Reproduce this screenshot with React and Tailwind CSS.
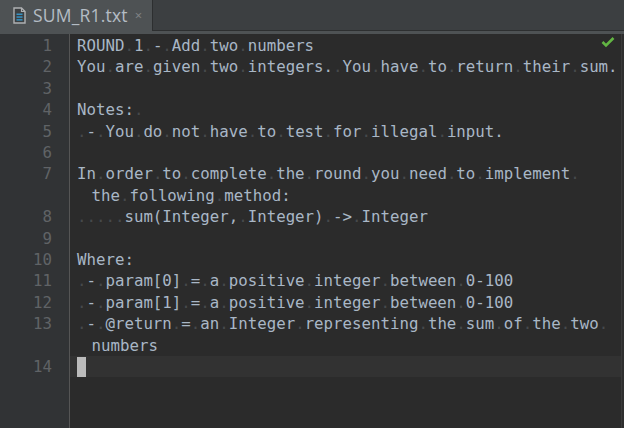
const lines = [
  { n: 1, rows: ["ROUND 1 - Add two numbers"] },
  { n: 2, rows: ["You are given two integers. You have to return their sum."] },
  { n: 3, rows: [""] },
  { n: 4, rows: ["Notes: "] },
  { n: 5, rows: [" - You do not have to test for illegal input."] },
  { n: 6, rows: [""] },
  { n: 7, rows: ["In order to complete the round you need to implement ", "the following method:"] },
  { n: 8, rows: ["     sum(Integer, Integer) -> Integer"] },
  { n: 9, rows: [""] },
  { n: 10, rows: ["Where:"] },
  { n: 11, rows: [" - param[0] = a positive integer between 0-100"] },
  { n: 12, rows: [" - param[1] = a positive integer between 0-100"] },
  { n: 13, rows: [" - @return = an Integer representing the sum of the two ", "numbers"] },
];

function Dotted({ text }) {
  const parts = text.split(" ");
  return (
    <>
      {parts.map((p, i) => (
        <span key={i}>
          {i > 0 && <span className="text-[#46494b]">.</span>}
          {p}
        </span>
      ))}
    </>
  );
}

function FileIcon() {
  return (
    <svg width="13" height="17" viewBox="0 0 13 17" className="shrink-0">
      <path d="M1 1h7.5L12 4.5V16H1z" fill="#3c3f41" stroke="#afb1b3" strokeWidth="1.4" />
      <path d="M8.5 1v3.5H12" fill="none" stroke="#afb1b3" strokeWidth="1.2" />
      <rect x="3.5" y="6.5" width="6" height="1.5" fill="#3592c4" />
      <rect x="3.5" y="9.3" width="6" height="1.5" fill="#3592c4" />
      <rect x="3.5" y="12.1" width="6" height="1.5" fill="#3592c4" />
    </svg>
  );
}

export default function App() {
  const rows = [];
  lines.forEach((l) =>
    l.rows.forEach((r, i) => rows.push({ num: i === 0 ? l.n : "", text: r, wrap: i > 0 }))
  );

  return (
    <div className="flex h-[428px] w-[624px] flex-col overflow-hidden bg-[#2b2b2b]">
      <div className="flex h-[31px] bg-[#3c3f41]">
        <div className="flex w-[152px] items-center gap-[7px] bg-[#4e5254] pl-[13px]">
          <FileIcon />
          <span className="font-['Open_Sans',sans-serif] text-[17.5px] tracking-[0.2px] text-[#b4bcc4]">SUM_R1.txt</span>
          <span className="text-[13px] text-[#7e8183]">×</span>
        </div>
        <div className="flex-1 border-b border-l border-[#2d2f30]" />
      </div>
      <div className="h-[3px] bg-[#4e5254]" />
      <div className="flex flex-1 font-['DejaVu_Sans_Mono',monospace] text-[15.75px] leading-[21.4px]">
        <div className="w-[70px] border-r border-[#555555] bg-[#313335] pt-[1px] text-[#606366]">
          {rows.map((r, i) => (
            <div key={i} className="h-[21.4px] w-[52px] text-right">
              {r.num}
            </div>
          ))}
          <div className="w-[52px] text-right">14</div>
        </div>
        <div className="relative flex-1 pt-[1px] text-[#a9b7c6]">
          <svg width="14" height="12" viewBox="0 0 14 12" className="absolute right-[6px] top-[2px]">
            <path d="M1.5 6l3.5 3.5L12.5 2" fill="none" stroke="#62b543" strokeWidth="2.6" />
          </svg>
          {rows.map((r, i) => (
            <div key={i} className={`whitespace-pre pl-[7px] ${r.wrap ? "pl-[21.5px]" : ""}`}>
              {r.text ? <Dotted text={r.text} /> : "\u00a0"}
            </div>
          ))}
          <div className="flex h-[21.4px] items-center bg-[#323232] pl-[7px]">
            <div className="h-[20px] w-[9px] bg-[#bbbbbb]" />
          </div>
        </div>
        <div className="w-[3px] border-l border-[#3a3a3a] bg-[#2e2e2e]" />
      </div>
    </div>
  );
}
